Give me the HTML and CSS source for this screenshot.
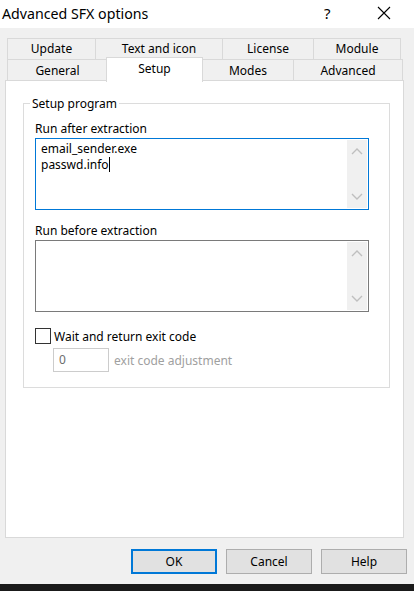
FILE: index.html
```html
<!DOCTYPE html>
<html>
<head>
<meta charset="utf-8">
<link rel="stylesheet" href="styles.css">
</head>
<body>
<div class="window">
  <div class="titlebar">
    <span class="title">Advanced SFX options</span>
    <span class="help-q">?</span>
    <svg class="close-x" width="14" height="14" viewBox="0 0 14 14"><path d="M1 1L13 13M13 1L1 13" stroke="#000" stroke-width="1.1" fill="none"/></svg>
  </div>
  <div class="client">
    <div class="tabs">
      <div class="tabrow back">
        <div class="tab w-update">Update</div>
        <div class="tab w-text">Text and icon</div>
        <div class="tab w-license">License</div>
        <div class="tab w-module">Module</div>
      </div>
      <div class="tabrow front">
        <div class="tab w-general">General</div>
        <div class="tab w-setup selected">Setup</div>
        <div class="tab w-modes">Modes</div>
        <div class="tab w-advanced">Advanced</div>
      </div>
    </div>
    <div class="panel">
      <fieldset class="group">
        <legend>Setup program</legend>
        <div class="label">Run after extraction</div>
        <div class="edit focused">
          <div class="edit-text">email_sender.exe<br>passwd.info<span class="caret"></span></div>
          <div class="scrollbar">
            <svg width="12" height="8" viewBox="0 0 12 8"><path d="M1 7L6 2L11 7" stroke="#bfbfbf" stroke-width="1.4" fill="none"/></svg>
            <svg width="12" height="8" viewBox="0 0 12 8"><path d="M1 1L6 6L11 1" stroke="#bfbfbf" stroke-width="1.4" fill="none"/></svg>
          </div>
        </div>
        <div class="label second">Run before extraction</div>
        <div class="edit">
          <div class="edit-text"></div>
          <div class="scrollbar">
            <svg width="12" height="8" viewBox="0 0 12 8"><path d="M1 7L6 2L11 7" stroke="#bfbfbf" stroke-width="1.4" fill="none"/></svg>
            <svg width="12" height="8" viewBox="0 0 12 8"><path d="M1 1L6 6L11 1" stroke="#bfbfbf" stroke-width="1.4" fill="none"/></svg>
          </div>
        </div>
        <div class="check-row">
          <span class="checkbox"></span>
          <span>Wait and return exit code</span>
        </div>
        <div class="adjust-row">
          <div class="small-input">0</div>
          <span class="disabled-label">exit code adjustment</span>
        </div>
      </fieldset>
    </div>
    <div class="buttons">
      <div class="btn default">OK</div>
      <div class="btn">Cancel</div>
      <div class="btn">Help</div>
    </div>
  </div>
  <div class="taskbar"></div>
</div>
</body>
</html>
```
FILE: styles.css
```css
* { box-sizing: border-box; }
html, body { margin: 0; padding: 0; }
body {
  font-family: "Noto Sans", "Open Sans", sans-serif;
  font-size: 12px;
  color: #000;
  background: #f0f0f0;
}
.window {
  width: 414px;
  height: 591px;
  display: flex;
  flex-direction: column;
  overflow: hidden;
}
.titlebar {
  height: 28px;
  background: #fff;
  display: flex;
  align-items: center;
  padding-left: 2px;
}
.title {
  font-size: 14.2px;
  flex: 1;
  margin-top: -2px;
}
.help-q {
  font-size: 15px;
  width: 14px;
  margin-right: 39px;
  margin-top: -2px;
}
.close-x {
  margin-right: 23px;
  margin-top: -2px;
}
.client {
  flex: 1;
  background: #f0f0f0;
  padding: 10px 10px 0 5px;
  display: flex;
  flex-direction: column;
}
.tabs {
  margin-left: 2px;
  width: 395px;
}
.tabrow {
  display: flex;
  height: 21px;
}
.tab {
  border: 1px solid #d9d9d9;
  border-bottom: none;
  margin-right: -1px;
  background: #f0f0f0;
  display: flex;
  align-items: center;
  justify-content: center;
  height: 22px;
  padding-bottom: 1px;
}
.back .tab { height: 21px; }
.w-update { width: 89px; }
.w-text { width: 128px; }
.w-license { width: 92px; }
.w-module { width: 88px; }
.w-general { width: 101px; }
.w-setup { width: 96px; }
.w-modes { width: 92px; }
.w-advanced { width: 110px; }
.tab.selected {
  background: #fff;
  height: 25px;
  margin-top: -2px;
  position: relative;
  z-index: 2;
  padding-bottom: 3px;
  margin-left: -1px;
  margin-right: -1px;
  width: 97px;
}
.panel {
  background: #fff;
  border: 1px solid #d9d9d9;
  width: 399px;
  height: 458px;
  padding: 15px 0 0 17px;
}
.group {
  margin: 0;
  width: 367px;
  border: 1px solid #dcdcdc;
  padding: 10px 0 15px 11px;
}
.group legend {
  padding: 0 2px;
  margin-left: -5px;
  line-height: 15px;
}
.label {
  line-height: 15px;
  height: 15px;
}
.label.second { margin-top: 13px; }
.edit {
  margin-top: 2px;
  width: 334px;
  height: 72px;
  border: 1px solid #7a7a7a;
  display: flex;
  background: #fff;
}
.edit.focused { border-color: #0078d7; }
.edit-text {
  flex: 1;
  padding: 2px 0 0 5px;
  line-height: 16px;
}
.caret {
  display: inline-block;
  width: 1px;
  height: 15px;
  background: #000;
  vertical-align: -3px;
}
.scrollbar {
  width: 20px;
  margin: 1px 1px 1px 0;
  background: #f0f0f0;
  display: flex;
  flex-direction: column;
  align-items: center;
  justify-content: space-between;
  padding: 7px 0 7px;
}
.check-row {
  margin-top: 16px;
  display: flex;
  align-items: center;
  gap: 3px;
  height: 16px;
}
.checkbox {
  width: 16px;
  height: 16px;
  border: 1px solid #333;
  background: #fff;
}
.adjust-row {
  margin-top: 4px;
  margin-left: 18px;
  display: flex;
  align-items: center;
  gap: 5px;
}
.small-input {
  width: 56px;
  height: 24px;
  border: 1px solid #cccccc;
  color: #6d6d6d;
  padding-left: 5px;
  line-height: 22px;
}
.disabled-label { color: #a0a0a0; }
.buttons {
  display: flex;
  justify-content: flex-end;
  gap: 9px;
  margin-top: 11px;
  margin-right: -3px;
}
.btn {
  width: 86px;
  height: 25px;
  background: #e1e1e1;
  border: 1px solid #adadad;
  display: flex;
  align-items: center;
  justify-content: center;
}
.btn.default { border: 2px solid #0078d7; }
.taskbar {
  height: 7px;
  background: #1a1a1a;
  margin-top: 10px;
}
```
